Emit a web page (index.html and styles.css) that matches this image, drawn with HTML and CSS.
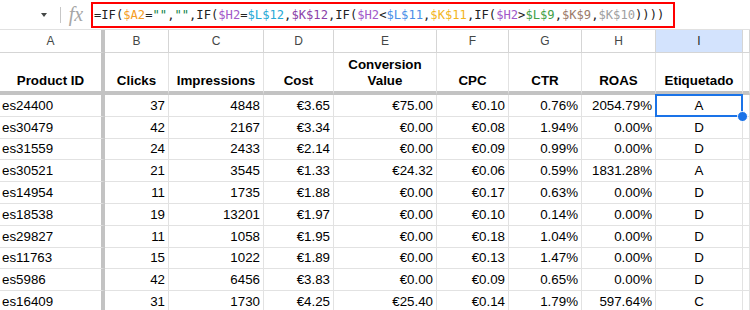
FILE: index.html
```html
<!DOCTYPE html>
<html>
<head>
<meta charset="utf-8">
<link rel="stylesheet" href="styles.css">
</head>
<body>
<div class="toolbar">
  <div class="namebox"><span class="caret"></span></div>
  <div class="sep"></div>
  <div class="fx">fx</div>
  <div class="formula">=IF(<span class="r-a">$A2</span>=<span class="str">""</span>,<span class="str">""</span>,IF(<span class="r-h">$H2</span>=<span class="r-l12">$L$12</span>,<span class="r-k12">$K$12</span>,IF(<span class="r-h">$H2</span>&lt;<span class="r-l11">$L$11</span>,<span class="r-k11">$K$11</span>,IF(<span class="r-h">$H2</span>&gt;<span class="r-l9">$L$9</span>,<span class="r-k9">$K$9</span>,<span class="r-k10">$K$10</span>))))</div>
</div>
<div class="sheet">
  <div class="row colhead">
    <div class="c frz">A</div><div class="c">B</div><div class="c">C</div><div class="c">D</div><div class="c">E</div><div class="c">F</div><div class="c">G</div><div class="c">H</div><div class="c sel">I</div><div class="c"></div>
  </div>
  <div class="row head">
    <div class="c frz">Product ID</div><div class="c">Clicks</div><div class="c">Impressions</div><div class="c">Cost</div><div class="c">Conversion<br>Value</div><div class="c">CPC</div><div class="c">CTR</div><div class="c">ROAS</div><div class="c">Etiquetado</div><div class="c"></div>
  </div>
  <div class="row data">
    <div class="c frz">es24400</div><div class="c">37</div><div class="c">4848</div><div class="c">€3.65</div><div class="c">€75.00</div><div class="c">€0.10</div><div class="c">0.76%</div><div class="c">2054.79%</div><div class="c lbl active">A<span class="handle"></span></div><div class="c"></div>
  </div>
  <div class="row data">
    <div class="c frz">es30479</div><div class="c">42</div><div class="c">2167</div><div class="c">€3.34</div><div class="c">€0.00</div><div class="c">€0.08</div><div class="c">1.94%</div><div class="c">0.00%</div><div class="c lbl">D</div><div class="c"></div>
  </div>
  <div class="row data">
    <div class="c frz">es31559</div><div class="c">24</div><div class="c">2433</div><div class="c">€2.14</div><div class="c">€0.00</div><div class="c">€0.09</div><div class="c">0.99%</div><div class="c">0.00%</div><div class="c lbl">D</div><div class="c"></div>
  </div>
  <div class="row data">
    <div class="c frz">es30521</div><div class="c">21</div><div class="c">3545</div><div class="c">€1.33</div><div class="c">€24.32</div><div class="c">€0.06</div><div class="c">0.59%</div><div class="c">1831.28%</div><div class="c lbl">A</div><div class="c"></div>
  </div>
  <div class="row data">
    <div class="c frz">es14954</div><div class="c">11</div><div class="c">1735</div><div class="c">€1.88</div><div class="c">€0.00</div><div class="c">€0.17</div><div class="c">0.63%</div><div class="c">0.00%</div><div class="c lbl">D</div><div class="c"></div>
  </div>
  <div class="row data">
    <div class="c frz">es18538</div><div class="c">19</div><div class="c">13201</div><div class="c">€1.97</div><div class="c">€0.00</div><div class="c">€0.10</div><div class="c">0.14%</div><div class="c">0.00%</div><div class="c lbl">D</div><div class="c"></div>
  </div>
  <div class="row data">
    <div class="c frz">es29827</div><div class="c">11</div><div class="c">1058</div><div class="c">€1.95</div><div class="c">€0.00</div><div class="c">€0.18</div><div class="c">1.04%</div><div class="c">0.00%</div><div class="c lbl">D</div><div class="c"></div>
  </div>
  <div class="row data">
    <div class="c frz">es11763</div><div class="c">15</div><div class="c">1022</div><div class="c">€1.89</div><div class="c">€0.00</div><div class="c">€0.13</div><div class="c">1.47%</div><div class="c">0.00%</div><div class="c lbl">D</div><div class="c"></div>
  </div>
  <div class="row data">
    <div class="c frz">es5986</div><div class="c">42</div><div class="c">6456</div><div class="c">€3.83</div><div class="c">€0.00</div><div class="c">€0.09</div><div class="c">0.65%</div><div class="c">0.00%</div><div class="c lbl">D</div><div class="c"></div>
  </div>
  <div class="row data">
    <div class="c frz">es16409</div><div class="c">31</div><div class="c">1730</div><div class="c">€4.25</div><div class="c">€25.40</div><div class="c">€0.14</div><div class="c">1.79%</div><div class="c">597.64%</div><div class="c lbl">C</div><div class="c"></div>
  </div>
</div>
</body>
</html>
```

FILE: styles.css
```css
* { box-sizing: border-box; }
html, body { margin: 0; padding: 0; background: #fff; }
body {
  width: 750px;
  height: 310px;
  overflow: hidden;
  font-family: "Liberation Sans", Arial, sans-serif;
  color: #000;
}

.toolbar {
  height: 30px;
  display: flex;
  align-items: center;
  border-bottom: 1px solid #e1e1e1;
}
.namebox {
  width: 60px;
  height: 100%;
  display: flex;
  align-items: center;
  justify-content: flex-end;
  padding-right: 13px;
}
.caret {
  width: 0;
  height: 0;
  border-left: 3.5px solid transparent;
  border-right: 3.5px solid transparent;
  border-top: 4px solid #444746;
  margin-top: 1px;
}
.sep {
  width: 1px;
  height: 16px;
  background: #c7c7c7;
}
.fx {
  width: 30px;
  text-align: center;
  font-family: "Liberation Serif", serif;
  font-style: italic;
  font-size: 20px;
  line-height: 20px;
  color: #a6a6a6;
  margin-top: -2px;
}
.formula {
  width: 584px;
  height: 26px;
  margin-top: 1px;
  border: 2px solid #ff0000;
  padding-left: 1px;
  display: flex;
  align-items: center;
  font-family: "DejaVu Sans Mono", "Liberation Mono", monospace;
  font-size: 12.15px;
  color: #222;
  white-space: nowrap;
  overflow: hidden;
}
.str { color: #0b8043; }
.r-a { color: #f59d24; }
.r-h { color: #a259c9; }
.r-l12 { color: #27a9d6; }
.r-k12 { color: #8b3fa8; }
.r-l11 { color: #4a8fe7; }
.r-k11 { color: #f2b51c; }
.r-l9 { color: #43a047; }
.r-k9 { color: #9c7a6a; }
.r-k10 { color: #a0a0a0; }

.row {
  display: grid;
  grid-template-columns: 105px 64px 95px 70px 103px 72px 73px 74px 87px 1fr;
}
.c {
  border-right: 1px solid #e2e2e2;
  border-bottom: 1px solid #e2e2e2;
  white-space: nowrap;
  overflow: visible;
}
.c.frz { border-right: 4px solid #c3c3c3; }

.colhead { height: 23px; }
.colhead .c {
  display: flex;
  align-items: center;
  justify-content: center;
  font-size: 12px;
  color: #444746;
  border-right-color: #d5d5d5;
  border-bottom-color: #d5d5d5;
}
.colhead .c.frz { border-right-color: #c3c3c3; }
.colhead .c.sel {
  background: #d3e3fd;
  color: #1f1f1f;
}

.head { height: 42px; }
.head .c {
  border-bottom: 4px solid #c3c3c3;
  display: flex;
  align-items: flex-end;
  justify-content: center;
  text-align: center;
  font-weight: bold;
  font-size: 13.33px;
  line-height: 16px;
  padding-bottom: 2px;
}

.data { height: 21.8px; }
.data .c {
  display: flex;
  align-items: center;
  justify-content: flex-end;
  padding: 0 3px 0 3px;
  font-size: 13.33px;
}
.data .c.frz { justify-content: flex-start; padding-left: 2px; }
.data .c.lbl { justify-content: center; }

.active { position: relative; }
.active::after {
  content: "";
  position: absolute;
  left: -1px;
  top: -1px;
  right: -1px;
  bottom: -1px;
  border: 2px solid #1a73e8;
}
.handle {
  position: absolute;
  right: -6px;
  bottom: -6px;
  width: 11px;
  height: 11px;
  border-radius: 50%;
  background: #1a73e8;
  border: 1px solid #fff;
  z-index: 2;
}
```
